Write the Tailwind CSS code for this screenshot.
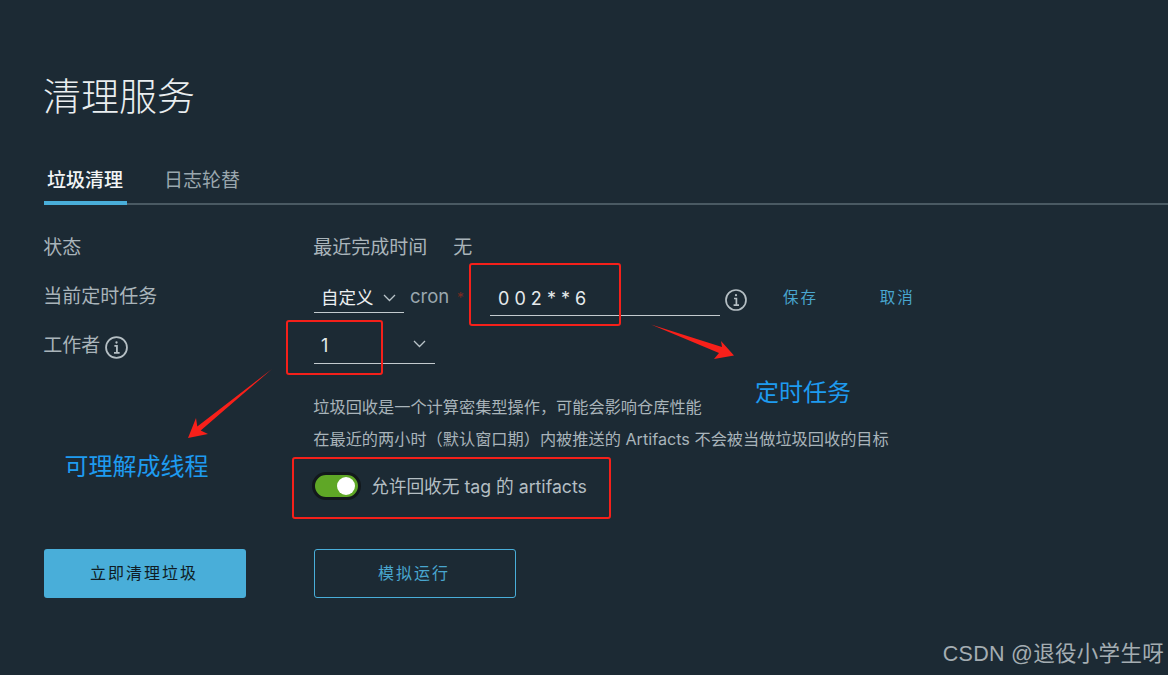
<!DOCTYPE html>
<html lang="zh-CN">
<head>
  <meta charset="UTF-8" />
  <title>清理服务</title>
  <script src="https://cdn.jsdelivr.net/npm/@tailwindcss/browser@4"></script>
</head>
<body class="bg-[#1c2a34] font-['Inter','Noto_Sans_CJK_SC',sans-serif]">
  <div class="relative w-[1168px] h-[675px] overflow-hidden">
    <main class="pl-[44px] pt-[74px]">
      <h1 class="-ml-px text-[38px] leading-[44px] font-light text-[#eaeef0]">清理服务</h1>

      <nav class="mt-[42px] h-[45px] flex border-b-2 border-[#4a5a63]">
        <a class="w-[83px] h-[45px] pl-[3px] pt-[8px] text-[19px] leading-[26px] font-medium text-[#f2f5f6] border-b-4 border-[#49aed9]">垃圾清理</a>
        <a class="ml-[37px] pt-[8px] text-[19px] leading-[26px] text-[#9aa7ae]">日志轮替</a>
      </nav>

      <section class="mt-[18px] text-[#a9b4ba]">
        <div class="flex items-center h-[48px] pt-[3px]">
          <div class="w-[270px] -indent-[0.7px] text-[19px]">状态</div>
          <div class="-indent-[0.7px] text-[19px]">最近完成时间</div>
          <div class="ml-[26px] text-[19px]">无</div>
        </div>

        <div class="flex items-center h-[50px]">
          <div class="w-[270px] -indent-[0.7px] pt-[3px] text-[19px]">当前定时任务</div>
          <div class="flex items-center w-[90px] h-[31px] mt-[3px] pl-[7px] pt-[2px] border-b border-[#c3cace] text-[#eceff1] text-[17.5px]">
            自定义
            <svg class="ml-[9px]" width="13" height="8" viewBox="0 0 13 8" fill="none" stroke="#b9c3c8" stroke-width="1.3"><path d="M1 1l5.5 5.5L12 1" /></svg>
          </div>
          <div class="ml-[6px] w-[40px] pt-[2px] text-[18.5px] text-[#9aa7ae]">cron</div>
          <div class="ml-[7px] w-[8px] pt-[2px] text-[14px] text-[#7d2a22]">*</div>
          <div class="ml-[25px] flex items-center w-[230px] h-[35px] mt-[5px] pl-[8px] border-b border-[#c3cace] text-[18px] text-[#e6eaec] whitespace-pre">0 0 2 * * 6</div>
          <svg class="ml-[5px] mt-[7px]" width="22" height="22" viewBox="0 0 22 22" fill="none" stroke="#b5bfc4"><circle cx="11" cy="11" r="10" stroke-width="1.7" /><path d="M9 9.5h2.4V16M8.6 16.2h5.4" stroke-width="1.7" /><circle cx="11" cy="6.2" r="1.1" fill="#b5bfc4" stroke="none" /></svg>
          <a class="ml-[36px] mt-[3px] text-[15.5px] tracking-[1.9px] text-[#49a6cf]">保存</a>
          <a class="ml-[62px] mt-[3px] text-[15.5px] tracking-[1.9px] text-[#49a6cf]">取消</a>
        </div>

        <div class="flex items-center h-[48px]">
          <div class="flex items-center w-[270px] pt-[3px] text-[19px]">
            <span class="-ml-[0.7px]">工作者</span>
            <svg class="ml-[5px] mt-[1px]" width="23" height="23" viewBox="0 0 22 22" fill="none" stroke="#b5bfc4"><circle cx="11" cy="11" r="10" stroke-width="1.7" /><path d="M9 9.5h2.4V16M8.6 16.2h5.4" stroke-width="1.7" /><circle cx="11" cy="6.2" r="1.1" fill="#b5bfc4" stroke="none" /></svg>
          </div>
          <div class="flex items-center justify-between w-[121px] h-[40px] mt-[-2px] pl-[7px] pr-[9px] pt-[4px] border-b border-[#c3cace] text-[18px] text-[#e6eaec]">
            1
            <svg class="-mt-[4px]" width="13" height="8" viewBox="0 0 13 8" fill="none" stroke="#b9c3c8" stroke-width="1.3"><path d="M1 1l5.5 5.5L12 1" /></svg>
          </div>
        </div>

        <div class="ml-[270px] mt-[22px] -indent-[0.7px] text-[16.2px] leading-[32px]">
          <p>垃圾回收是一个计算密集型操作&#xFF0C;可能会影响仓库性能</p>
          <p>在最近的两小时&#xFF08;默认窗口期&#xFF09;内被推送的 Artifacts 不会被当做垃圾回收的目标</p>
        </div>

        <div class="ml-[268px] mt-[15px] flex items-center h-[32px]">
          <div class="flex items-center justify-end w-[49px] h-[28px] pr-[3px] rounded-full bg-[#5fa726] border-[3px] border-[#12181c]">
            <div class="w-[18px] h-[18px] rounded-full bg-white"></div>
          </div>
          <span class="ml-[10px] pt-[3px] text-[17.7px] text-[#b4bec3]">允许回收无 tag 的 artifacts</span>
        </div>
      </section>

      <div class="mt-[47px] flex gap-[68px]">
        <button class="w-[202px] h-[49px] pr-[2px] pb-[1px] rounded-[3px] bg-[#49aed9] text-[16px] tracking-[2px] text-[#0f1c24]">立即清理垃圾</button>
        <button class="w-[202px] h-[49px] pr-[2px] pb-[1px] rounded-[3px] border border-[#49aed9] text-[16px] tracking-[2px] text-[#49a6cf]">模拟运行</button>
      </div>
    </main>

    <!-- annotations drawn over the screenshot -->
    <div class="absolute left-[469px] top-[263px] w-[152px] h-[63px] rounded-[3px] border-2 border-[#f5201a]"></div>
    <div class="absolute left-[286px] top-[320px] w-[97px] h-[55px] rounded-[3px] border-2 border-[#f5201a]"></div>
    <div class="absolute left-[292px] top-[457px] w-[319px] h-[62px] rounded-[3px] border-2 border-[#f5201a]"></div>
    <svg class="absolute left-0 top-0" width="1168" height="675" fill="#f8201a">
      <polygon points="651,324.5 722,347 721,341 734,355.5 714,359 719,353" />
      <polygon points="272,369 200.7,430.5 208,434 188,438 196,418 197.3,426.5" />
    </svg>
    <div class="absolute left-[64.5px] top-[449px] text-[24px] leading-[36px] text-[#1e9bf0]">可理解成线程</div>
    <div class="absolute left-[755px] top-[375px] text-[24px] leading-[36px] text-[#1e9bf0]">定时任务</div>
    <div class="absolute right-[4px] top-[639px] font-['Liberation_Sans','Noto_Sans_CJK_SC',sans-serif] text-[21.5px] leading-[30px] tracking-[0.3px] text-[#a4adb2]">CSDN @退役小学生呀</div>
  </div>
</body>
</html>
